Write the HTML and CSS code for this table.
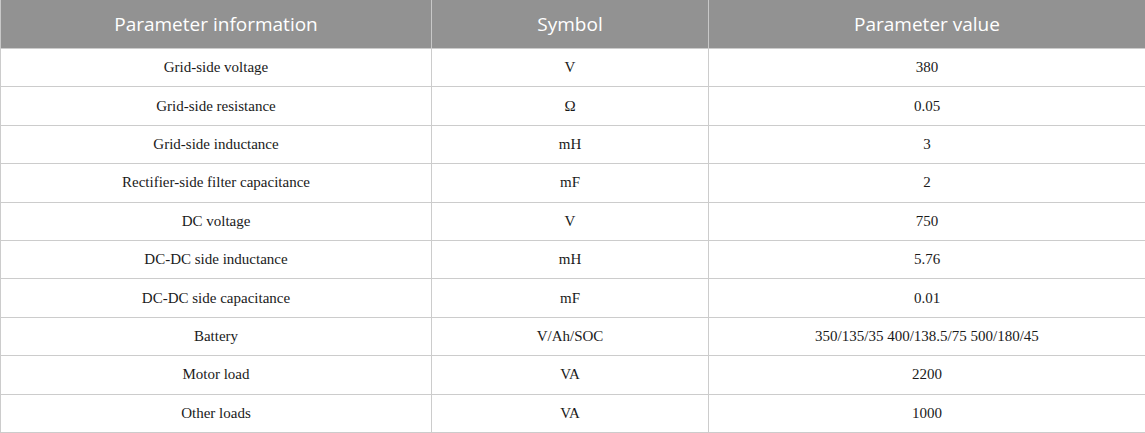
FILE: index.html
```html
<!DOCTYPE html>
<html>
<head>
<meta charset="utf-8">
<link rel="stylesheet" href="styles.css">
</head>
<body>
<table class="params">
  <colgroup>
    <col class="c1"><col class="c2"><col class="c3">
  </colgroup>
  <thead>
    <tr><th>Parameter information</th><th>Symbol</th><th>Parameter value</th></tr>
  </thead>
  <tbody>
    <tr><td>Grid-side voltage</td><td>V</td><td>380</td></tr>
    <tr><td>Grid-side resistance</td><td>Ω</td><td>0.05</td></tr>
    <tr><td>Grid-side inductance</td><td>mH</td><td>3</td></tr>
    <tr><td>Rectifier-side filter capacitance</td><td>mF</td><td>2</td></tr>
    <tr><td>DC voltage</td><td>V</td><td>750</td></tr>
    <tr><td>DC-DC side inductance</td><td>mH</td><td>5.76</td></tr>
    <tr><td>DC-DC side capacitance</td><td>mF</td><td>0.01</td></tr>
    <tr><td>Battery</td><td>V/Ah/SOC</td><td>350/135/35 400/138.5/75 500/180/45</td></tr>
    <tr><td>Motor load</td><td>VA</td><td>2200</td></tr>
    <tr><td>Other loads</td><td>VA</td><td>1000</td></tr>
  </tbody>
</table>
</body>
</html>
```
FILE: styles.css
```css
html, body {
  margin: 0;
  padding: 0;
  background: #ffffff;
}
.params {
  width: 1145px;
  border-collapse: collapse;
  table-layout: fixed;
}
.c1 { width: 431px; }
.c2 { width: 277px; }
.c3 { width: 437px; }
.params th {
  background: #929292;
  color: #ffffff;
  font-family: "Open Sans", "Liberation Sans", sans-serif;
  font-weight: 400;
  font-size: 19px;
  height: 48px;
  padding: 0;
  text-align: center;
  border-left: 1px solid #c8c8c8;
  border-right: 1px solid #c8c8c8;
  border-bottom: 1px solid #cccccc;
}
.params td {
  font-family: "Liberation Serif", "Times New Roman", serif;
  font-size: 15px;
  color: #1a1a1a;
  height: 37.4px;
  padding: 0;
  text-align: center;
  border: 1px solid #cccccc;
}
```
